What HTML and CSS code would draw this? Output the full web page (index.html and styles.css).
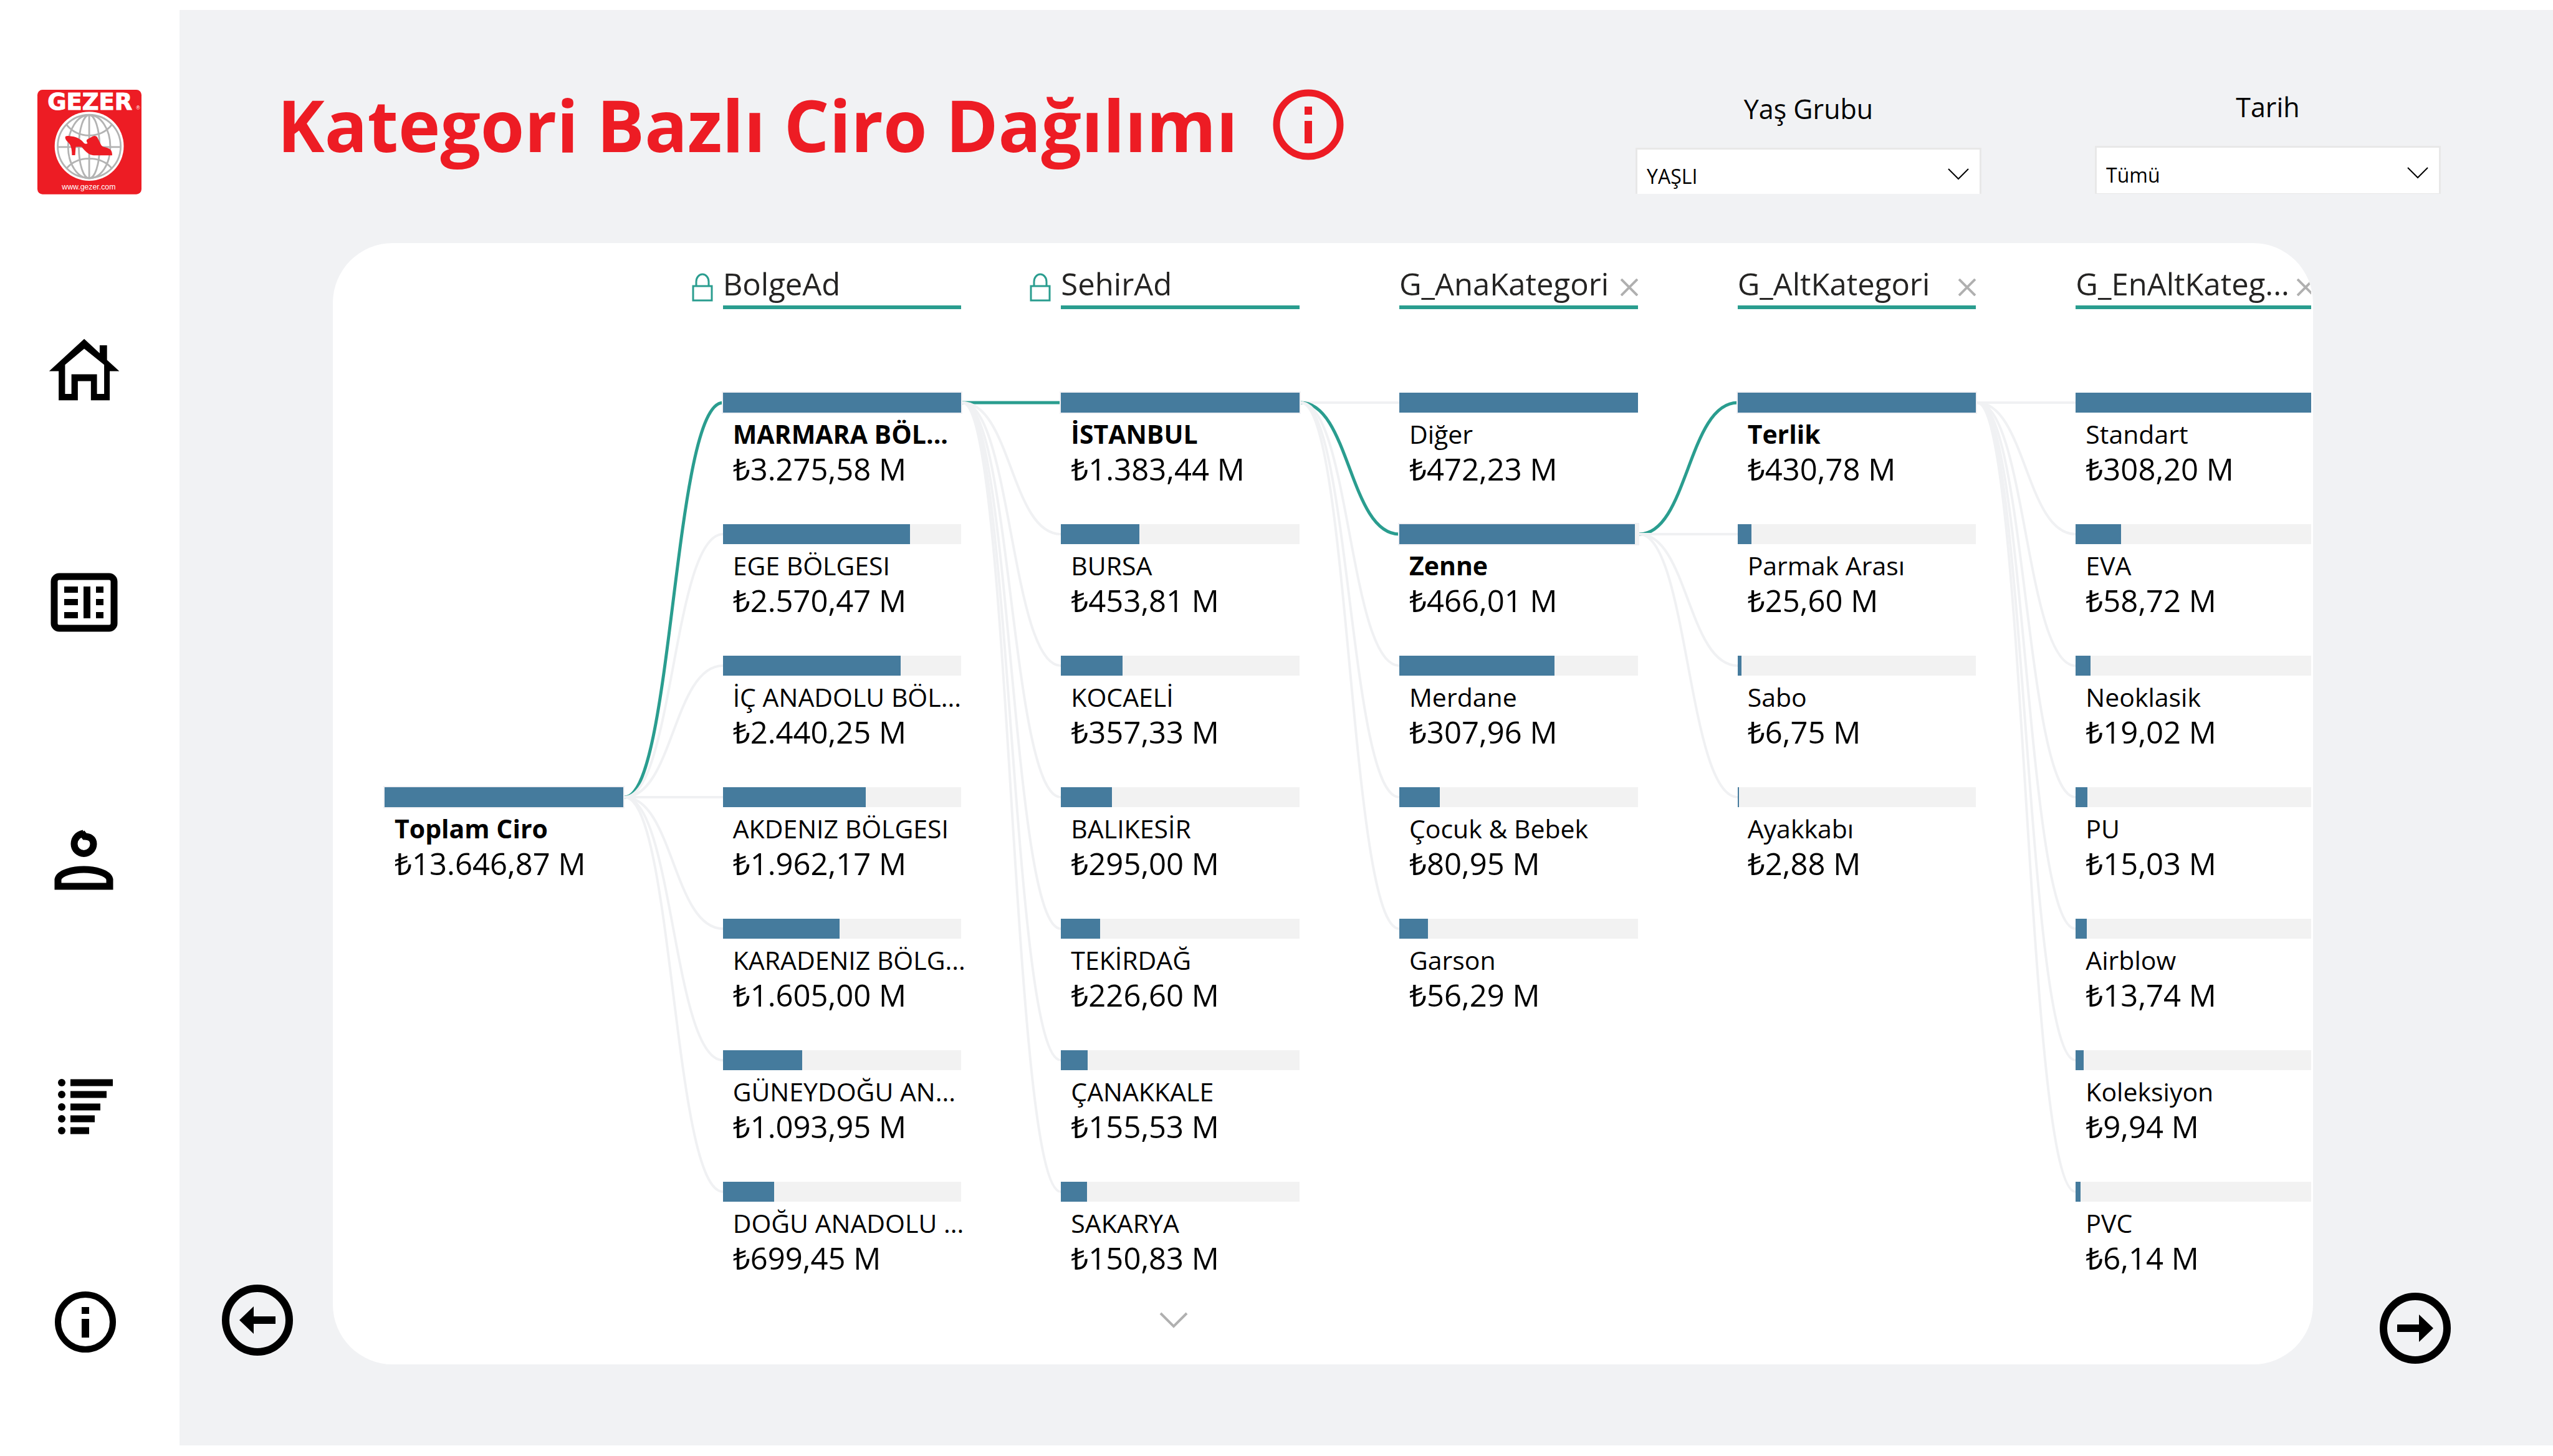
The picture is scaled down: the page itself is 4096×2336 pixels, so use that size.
FILE: index.html
```html
<!DOCTYPE html>
<html lang="tr">
<head>
<meta charset="utf-8">
<meta name="viewport" content="width=device-width, initial-scale=1">
<title>Kategori Bazlı Ciro Dağılımı</title>
<link rel="stylesheet" href="styles.css">
</head>
<body>
<div class="app">
  <aside class="sidebar">
    <a class="logo" href="#" aria-label="Gezer">
      <svg viewBox="0 0 651 654">
        <rect width="651" height="654" rx="32" fill="#ed1c24"/>
        <text class="logo-name" x="328" y="124" text-anchor="middle">GEZER</text>
        <text class="logo-mark" x="618" y="124">®</text>
        <circle cx="324" cy="353" r="216" fill="#fff"/>
        <g fill="none" stroke="#b3b3b3" stroke-width="11">
          <circle cx="324" cy="354" r="197"/>
          <ellipse cx="324" cy="356" rx="132" ry="198"/>
          <ellipse cx="324" cy="356" rx="65" ry="198"/>
          <path d="M324 156V552M127 358H521M180 216Q235 286 324 286T468 216M180 494Q235 430 324 430T468 494"/>
        </g>
        <path fill="#ed1c24" d="M174 298C174 288 186 287 200 289C240 292 272 306 292 334C300 340 308 340 314 334C306 324 304 314 316 308L344 292C358 286 370 288 376 300L398 344C402 354 412 357 424 360C452 366 468 376 468 410H352C322 410 300 386 276 357H240L236 409H216C216 380 212 356 202 340C190 324 174 314 174 298Z"/>
        <text class="logo-url" x="321" y="624" text-anchor="middle">www.gezer.com</text>
      </svg>
    </a>
    <nav class="nav" aria-label="Sayfalar">
      <a href="#" aria-label="Ana sayfa">
        <svg viewBox="24 8 469 469"><path fill-rule="evenodd" d="M35 252L255 50L352 140V90H398V182L475 252H415V435H297V315H215V435H95V252ZM255 112L380 212V395H335V272H175V395H135V212Z"/></svg>
      </a>
      <a href="#" aria-label="Tablo">
        <svg viewBox="0 0 120 120"><rect x="11" y="19" width="96" height="83" rx="8" fill="none" stroke="#000" stroke-width="11"/><path d="M27 35H49V45H27ZM27 55H49V65H27ZM27 76H49V86H27ZM58 35H69V86H58ZM78 35H90V45H78ZM78 55H90V65H78ZM78 76H90V86H78Z"/></svg>
      </a>
      <a href="#" aria-label="Müşteri">
        <svg viewBox="0 0 120 120" fill="none" stroke="#000" stroke-width="11"><path d="M58 17C48 19 43 26 43 34A15.500 15.500 0 0 0 74 34C74 25 67 22 60 22L55 16"/><path d="M17 102V91C19 80 42 75 58.500 75S98 80 100 91V102Z"/></svg>
      </a>
      <a href="#" aria-label="Sıralama">
        <svg viewBox="0 0 120 120"><g><circle cx="23" cy="21" r="6"/><circle cx="23" cy="40" r="6"/><circle cx="23" cy="60" r="6"/><circle cx="23" cy="79" r="6"/><circle cx="23" cy="98" r="6"/></g><path d="M37 15.500H105V26.500H37ZM37 34.500H95V45.500H37ZM37 54.500H85V65.500H37ZM37 73.500H76V84.500H37ZM37 92.500H67V103.500H37Z"/></svg>
      </a>
      <a href="#" aria-label="Bilgi">
        <svg viewBox="0 0 120 120"><circle cx="61" cy="60" r="44" fill="none" stroke="#000" stroke-width="10"/><path d="M55 36H67V47H55ZM55 55H67V85H55Z"/></svg>
      </a>
    </nav>
  </aside>

  <main class="main">
    <header class="header">
      <div class="heading">
        <h1>Kategori Bazlı Ciro Dağılımı</h1>
        <button class="info" type="button" aria-label="Bilgi">
          <svg viewBox="0 0 114 114"><circle cx="57" cy="57" r="51" fill="none" stroke="#ed1c24" stroke-width="11"/><path fill="#ed1c24" d="M51 28H63V41H51ZM51 51H63V87H51Z"/></svg>
        </button>
      </div>
      <div class="filters">
        <div class="filter">
          <label for="age">Yaş Grubu</label>
          <div class="select">
            <select id="age"><option>YAŞLI</option></select>
            <svg viewBox="0 0 34 19"><path d="M1 1L17 17L33 1"/></svg>
          </div>
        </div>
        <div class="filter filter-date">
          <label for="date">Tarih</label>
          <div class="select">
            <select id="date"><option>Tümü</option></select>
            <svg viewBox="0 0 34 19"><path d="M1 1L17 17L33 1"/></svg>
          </div>
        </div>
      </div>
    </header>

    <div class="stage">
      <button class="pager pager-back" type="button" aria-label="Geri">
        <svg viewBox="-58 -58 116 116"><circle r="51" fill="none" stroke="#000" stroke-width="12"/><path d="M-29 0L-6 -22V-6H29V6H-6V22Z"/></svg>
      </button>

      <section class="card">
        <div class="viewport">
          <div class="tree">
            <div class="lock lock-region"><svg viewBox="0 0 34 46"><path d="M2 21H32V44H2ZM7 21V14A10 12 0 0 1 27 14V21"/></svg></div>
            <div class="level level-region"><h2>BolgeAd</h2></div>
            <div class="lock lock-city"><svg viewBox="0 0 34 46"><path d="M2 21H32V44H2ZM7 21V14A10 12 0 0 1 27 14V21"/></svg></div>
            <div class="level level-city"><h2>SehirAd</h2></div>
            <div class="level level-main"><h2>G_AnaKategori</h2><button type="button" aria-label="Kaldır"><svg viewBox="0 0 28 28"><path d="M1 1L27 27M27 1L1 27"/></svg></button></div>
            <div class="level level-sub"><h2>G_AltKategori</h2><button type="button" aria-label="Kaldır"><svg viewBox="0 0 28 28"><path d="M1 1L27 27M27 1L1 27"/></svg></button></div>
            <div class="level level-leaf"><h2>G_EnAltKateg...</h2><button type="button" aria-label="Kaldır"><svg viewBox="0 0 28 28"><path d="M1 1L27 27M27 1L1 27"/></svg></button></div>

            <ul class="nodes nodes-root">
              <li class="node selected"><div class="bar"><div class="fill" style="width:100%"></div></div><p class="name">Toplam Ciro</p><p class="value">₺13.646,87 M</p></li>
            </ul>

            <svg class="links" viewBox="0 0 160 1298" preserveAspectRatio="none">
              <path class="on" d="M2 649C80 649 80 16 160 16"/>
              <path d="M2 649C80 649 80 227 160 227"/>
              <path d="M2 649C80 649 80 438 160 438"/>
              <path d="M2 649H160"/>
              <path d="M2 649C80 649 80 860 160 860"/>
              <path d="M2 649C80 649 80 1071 160 1071"/>
              <path d="M2 649C80 649 80 1282 160 1282"/>
            </svg>

            <ul class="nodes">
              <li class="node selected"><div class="bar"><div class="fill" style="width:100%"></div></div><p class="name">MARMARA BÖL...</p><p class="value">₺3.275,58 M</p></li>
              <li class="node"><div class="bar"><div class="fill" style="width:78.5%"></div></div><p class="name">EGE BÖLGESI</p><p class="value">₺2.570,47 M</p></li>
              <li class="node"><div class="bar"><div class="fill" style="width:74.5%"></div></div><p class="name">İÇ ANADOLU BÖL...</p><p class="value">₺2.440,25 M</p></li>
              <li class="node"><div class="bar"><div class="fill" style="width:59.9%"></div></div><p class="name">AKDENIZ BÖLGESI</p><p class="value">₺1.962,17 M</p></li>
              <li class="node"><div class="bar"><div class="fill" style="width:49%"></div></div><p class="name">KARADENIZ BÖLG...</p><p class="value">₺1.605,00 M</p></li>
              <li class="node"><div class="bar"><div class="fill" style="width:33.4%"></div></div><p class="name">GÜNEYDOĞU AN...</p><p class="value">₺1.093,95 M</p></li>
              <li class="node"><div class="bar"><div class="fill" style="width:21.4%"></div></div><p class="name">DOĞU ANADOLU ...</p><p class="value">₺699,45 M</p></li>
            </ul>

            <svg class="links" viewBox="0 0 160 1298" preserveAspectRatio="none">
              <path class="on" d="M2 16H160"/>
              <path d="M2 16C80 16 80 227 160 227"/>
              <path d="M2 16C80 16 80 438 160 438"/>
              <path d="M2 16C80 16 80 649 160 649"/>
              <path d="M2 16C80 16 80 860 160 860"/>
              <path d="M2 16C80 16 80 1071 160 1071"/>
              <path d="M2 16C80 16 80 1282 160 1282"/>
            </svg>

            <div class="column">
              <ul class="nodes">
                <li class="node selected"><div class="bar"><div class="fill" style="width:100%"></div></div><p class="name">İSTANBUL</p><p class="value">₺1.383,44 M</p></li>
                <li class="node"><div class="bar"><div class="fill" style="width:32.8%"></div></div><p class="name">BURSA</p><p class="value">₺453,81 M</p></li>
                <li class="node"><div class="bar"><div class="fill" style="width:25.8%"></div></div><p class="name">KOCAELİ</p><p class="value">₺357,33 M</p></li>
                <li class="node"><div class="bar"><div class="fill" style="width:21.3%"></div></div><p class="name">BALIKESİR</p><p class="value">₺295,00 M</p></li>
                <li class="node"><div class="bar"><div class="fill" style="width:16.4%"></div></div><p class="name">TEKİRDAĞ</p><p class="value">₺226,60 M</p></li>
                <li class="node"><div class="bar"><div class="fill" style="width:11.2%"></div></div><p class="name">ÇANAKKALE</p><p class="value">₺155,53 M</p></li>
                <li class="node"><div class="bar"><div class="fill" style="width:10.9%"></div></div><p class="name">SAKARYA</p><p class="value">₺150,83 M</p></li>
              </ul>
              <button class="more" type="button" aria-label="Daha fazla"><svg viewBox="0 0 46 26"><path d="M2 2L23 23L44 2"/></svg></button>
            </div>

            <svg class="links" viewBox="0 0 160 1298" preserveAspectRatio="none">
              <path d="M2 16H160"/>
              <path class="on" d="M2 16C80 16 80 227 160 227"/>
              <path d="M2 16C80 16 80 438 160 438"/>
              <path d="M2 16C80 16 80 649 160 649"/>
              <path d="M2 16C80 16 80 860 160 860"/>
            </svg>

            <ul class="nodes">
              <li class="node"><div class="bar"><div class="fill" style="width:100%"></div></div><p class="name">Diğer</p><p class="value">₺472,23 M</p></li>
              <li class="node selected"><div class="bar"><div class="fill" style="width:98.7%"></div></div><p class="name">Zenne</p><p class="value">₺466,01 M</p></li>
              <li class="node"><div class="bar"><div class="fill" style="width:65.2%"></div></div><p class="name">Merdane</p><p class="value">₺307,96 M</p></li>
              <li class="node"><div class="bar"><div class="fill" style="width:17.1%"></div></div><p class="name">Çocuk &amp; Bebek</p><p class="value">₺80,95 M</p></li>
              <li class="node"><div class="bar"><div class="fill" style="width:11.9%"></div></div><p class="name">Garson</p><p class="value">₺56,29 M</p></li>
            </ul>

            <svg class="links" viewBox="0 0 160 1298" preserveAspectRatio="none">
              <path class="on" d="M2 227C80 227 80 16 160 16"/>
              <path d="M2 227H160"/>
              <path d="M2 227C80 227 80 438 160 438"/>
              <path d="M2 227C80 227 80 649 160 649"/>
            </svg>

            <ul class="nodes">
              <li class="node selected"><div class="bar"><div class="fill" style="width:100%"></div></div><p class="name">Terlik</p><p class="value">₺430,78 M</p></li>
              <li class="node"><div class="bar"><div class="fill" style="width:5.9%"></div></div><p class="name">Parmak Arası</p><p class="value">₺25,60 M</p></li>
              <li class="node"><div class="bar"><div class="fill" style="width:1.6%"></div></div><p class="name">Sabo</p><p class="value">₺6,75 M</p></li>
              <li class="node"><div class="bar"><div class="fill" style="width:0.7%"></div></div><p class="name">Ayakkabı</p><p class="value">₺2,88 M</p></li>
            </ul>

            <svg class="links" viewBox="0 0 160 1298" preserveAspectRatio="none">
              <path d="M2 16H160"/>
              <path d="M2 16C80 16 80 227 160 227"/>
              <path d="M2 16C80 16 80 438 160 438"/>
              <path d="M2 16C80 16 80 649 160 649"/>
              <path d="M2 16C80 16 80 860 160 860"/>
              <path d="M2 16C80 16 80 1071 160 1071"/>
              <path d="M2 16C80 16 80 1282 160 1282"/>
            </svg>

            <ul class="nodes">
              <li class="node"><div class="bar"><div class="fill" style="width:100%"></div></div><p class="name">Standart</p><p class="value">₺308,20 M</p></li>
              <li class="node"><div class="bar"><div class="fill" style="width:19.1%"></div></div><p class="name">EVA</p><p class="value">₺58,72 M</p></li>
              <li class="node"><div class="bar"><div class="fill" style="width:6.2%"></div></div><p class="name">Neoklasik</p><p class="value">₺19,02 M</p></li>
              <li class="node"><div class="bar"><div class="fill" style="width:4.9%"></div></div><p class="name">PU</p><p class="value">₺15,03 M</p></li>
              <li class="node"><div class="bar"><div class="fill" style="width:4.5%"></div></div><p class="name">Airblow</p><p class="value">₺13,74 M</p></li>
              <li class="node"><div class="bar"><div class="fill" style="width:3.2%"></div></div><p class="name">Koleksiyon</p><p class="value">₺9,94 M</p></li>
              <li class="node"><div class="bar"><div class="fill" style="width:2%"></div></div><p class="name">PVC</p><p class="value">₺6,14 M</p></li>
            </ul>
          </div>
        </div>
      </section>

      <button class="pager pager-next" type="button" aria-label="İleri">
        <svg viewBox="-58 -58 116 116"><circle r="51" fill="none" stroke="#000" stroke-width="12"/><path d="M29 0L6 -22V-6H-29V6H6V22Z"/></svg>
      </button>
    </div>
  </main>
</div>
</body>
</html>
```
FILE: styles.css
```css
* {
  box-sizing: border-box;
  margin: 0;
  padding: 0;
}

body {
  background: #fff;
  color: #000;
  font-family: "Open Sans", "Noto Sans", sans-serif;
}

svg {
  display: block;
}

button {
  border: 0;
  background: none;
  cursor: pointer;
}

ul {
  list-style: none;
}

.app {
  display: flex;
  min-height: 100vh;
  padding: 16px 0 17px;
}

/* Sidebar */

.sidebar {
  flex: 0 0 288px;
  padding-top: 128px;
}

.logo {
  display: block;
  width: 167px;
  margin-left: 60px;
}

.logo svg {
  overflow: visible;
}

.logo-name {
  fill: #fff;
  stroke: #fff;
  stroke-width: 4px;
  font: 700 144px "DejaVu Sans", sans-serif;
}

.logo-mark {
  fill: #fff;
  font: 32px "Liberation Sans", sans-serif;
}

.logo-url {
  fill: #fff;
  font: 48px "Liberation Sans", sans-serif;
}

.nav {
  display: grid;
  grid-template-rows: 373px 414px 396px 345px 120px;
  margin: 221px 0 0 76px;
}

.nav a {
  width: 120px;
  height: 120px;
}

/* Header */

.main {
  flex: 1;
  min-width: 0;
  background: #f1f2f4;
}

.header {
  display: flex;
  justify-content: space-between;
  padding: 108px 180px 79px 157px;
}

.heading {
  display: flex;
  align-items: center;
  gap: 56px;
  height: 152px;
}

h1 {
  color: #ed1c24;
  font-size: 114px;
  line-height: 152px;
  white-space: nowrap;
}

.info {
  width: 114px;
  height: 114px;
}

.filters {
  display: flex;
  align-items: flex-end;
  gap: 182px;
  padding-top: 16px;
}

.filter {
  display: grid;
  gap: 30px;
  width: 555px;
}

.filter label {
  font-size: 43px;
  line-height: 64px;
  text-align: center;
}

.select {
  display: grid;
  align-items: center;
}

.select select {
  grid-area: 1 / 1;
  height: 74px;
  padding: 14px 60px 0 15px;
  border: 3px solid #e8e8e8;
  border-bottom: 0;
  border-radius: 0;
  background: #fff;
  color: #000;
  font-family: inherit;
  font-size: 32px;
  appearance: none;
}

.filter-date select {
  height: 77px;
  border-bottom: 1px solid #e8e8e8;
}

.select svg {
  grid-area: 1 / 1;
  justify-self: end;
  width: 34px;
  height: 19px;
  margin: 10px 20px 0 0;
  fill: none;
  stroke: #000;
  stroke-width: 2;
  pointer-events: none;
}

/* Stage: pagers either side of the tree card */

.stage {
  display: grid;
  grid-template-columns: 246px 1fr 385px;
  align-items: end;
}

.pager {
  width: 116px;
  height: 116px;
}

.pager-back {
  margin: 0 0 13px 67px;
}

.pager-next {
  margin-left: 106px;
}

.card {
  overflow: hidden;
  padding: 0 3px 58px 83px;
  border-radius: 96px;
  background: #fff;
}

.viewport {
  overflow: hidden;
  margin-left: -8px;
  padding-left: 8px;
}

/* Five split levels plus the root, with a connector lane between each */

.tree {
  display: grid;
  grid-template-columns: 1fr 160px 1fr 160px 1fr 160px 1fr 160px 1fr 160px 1fr;
  grid-template-rows: 106px auto;
  row-gap: 134px;
  width: calc(100% + 5px);
}

.lock {
  grid-row: 1;
  justify-self: end;
  align-self: end;
  margin: 0 16px 12px 0;
}

.lock-region {
  grid-column: 2;
}

.lock-city {
  grid-column: 4;
}

.lock svg {
  width: 34px;
  height: 46px;
  fill: none;
  stroke: #2a9d8f;
  stroke-width: 3;
}

.level {
  display: flex;
  grid-row: 1;
  align-items: flex-end;
  justify-content: space-between;
  min-width: 0;
  padding-bottom: 5px;
  border-bottom: 6px solid #2a9d8f;
}

.level-region {
  grid-column: 3;
}

.level-city {
  grid-column: 5;
}

.level-main {
  grid-column: 7;
}

.level-sub {
  grid-column: 9;
}

.level-leaf {
  grid-column: 11;
}

h2 {
  color: #252423;
  font-size: 49px;
  font-weight: 400;
  line-height: 60px;
  white-space: nowrap;
}

.level button {
  width: 28px;
  height: 28px;
  margin-bottom: 10px;
}

.level svg,
.more svg {
  fill: none;
  stroke: #b0b0b0;
  stroke-width: 4;
}

.nodes {
  display: grid;
  grid-row: 2;
  grid-template-columns: minmax(0, 1fr);
  gap: 61px;
  align-content: start;
  min-width: 0;
  z-index: 1;
}

.nodes-root {
  grid-column: 1;
  padding-top: 633px;
}

.column {
  grid-row: 2;
  min-width: 0;
  z-index: 1;
}

.bar {
  height: 32px;
  margin-bottom: 7px;
  background: #f2f2f2;
}

.fill {
  height: 100%;
  background: #457b9d;
}

.selected .bar {
  box-shadow: 0 0 0 2px #f1f1f4;
}

.name,
.value {
  padding-left: 16px;
  white-space: nowrap;
}

.name {
  font-size: 41px;
  line-height: 55px;
}

.selected .name {
  font-weight: 700;
}

.value {
  font-size: 49px;
  line-height: 56px;
}

.links {
  grid-row: 2;
  width: 160px;
  height: 1298px;
  fill: none;
  stroke: #f0f1f3;
  stroke-width: 4;
}

.links .on {
  stroke: #2a9d8f;
  stroke-width: 5;
}

.more {
  display: block;
  width: 46px;
  height: 26px;
  margin: 59px 0 0 158px;
}
```
